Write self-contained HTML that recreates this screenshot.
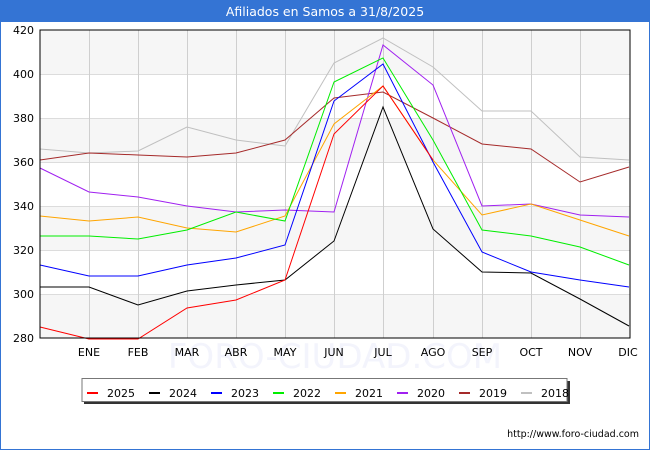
<!DOCTYPE html><html><head><style>
body{margin:0;width:650px;height:450px;overflow:hidden;font-family:"DejaVu Sans","Liberation Sans",sans-serif}
</style></head><body>
<svg width="650" height="450" xmlns="http://www.w3.org/2000/svg" font-family="DejaVu Sans, Liberation Sans, sans-serif">
<rect x="0.5" y="0.5" width="649" height="449" fill="#fff" stroke="#3474d4"/>
<rect x="0" y="0" width="650" height="22" fill="#3474d4"/>
<text x="325" y="16" fill="#fff" font-size="12.5" text-anchor="middle">Afiliados en Samos a 31/8/2025</text>
<g fill="#f6f6f6"><rect x="40" y="30" width="590" height="44"/><rect x="40" y="118" width="590" height="44"/><rect x="40" y="206" width="590" height="44"/><rect x="40" y="294" width="590" height="44"/></g>
<g stroke="#dcdcdc"><line x1="40" x2="630" y1="74.5" y2="74.5"/><line x1="40" x2="630" y1="118.5" y2="118.5"/><line x1="40" x2="630" y1="162.5" y2="162.5"/><line x1="40" x2="630" y1="206.5" y2="206.5"/><line x1="40" x2="630" y1="250.5" y2="250.5"/><line x1="40" x2="630" y1="294.5" y2="294.5"/></g>
<g stroke="#cfcfcf"><line x1="89.5" x2="89.5" y1="30" y2="338"/><line x1="138.5" x2="138.5" y1="30" y2="338"/><line x1="187.5" x2="187.5" y1="30" y2="338"/><line x1="236.5" x2="236.5" y1="30" y2="338"/><line x1="285.5" x2="285.5" y1="30" y2="338"/><line x1="334.5" x2="334.5" y1="30" y2="338"/><line x1="383.5" x2="383.5" y1="30" y2="338"/><line x1="433.5" x2="433.5" y1="30" y2="338"/><line x1="482.5" x2="482.5" y1="30" y2="338"/><line x1="531.5" x2="531.5" y1="30" y2="338"/><line x1="580.5" x2="580.5" y1="30" y2="338"/></g>
<text x="335" y="368" font-size="34" fill="#f3f4fc" text-anchor="middle">FORO-CIUDAD.COM</text>
<g fill="none" stroke-width="1">
<polyline stroke="#c0c0c0" points="40,149 89,153 138,151 187,127 236,140 285,146 334,63 383,38 433,67 482,111 531,111 580,157 629,160"/>
<polyline stroke="#a52a2a" points="40,160 89,153 138,155 187,157 236,153 285,140 334,98 383,92 433,118 482,144 531,149 580,182 629,167"/>
<polyline stroke="#a020f0" points="40,168 89,192 138,197 187,206 236,212 285,210 334,212 383,45 433,85 482,206 531,204 580,215 629,217"/>
<polyline stroke="#ffa500" points="40,216 89,221 138,217 187,228 236,232 285,216 334,124 383,86 433,160 482,215 531,204 580,220 629,236"/>
<polyline stroke="#00ee00" points="40,236 89,236 138,239 187,230 236,212 285,221 334,82 383,58 433,140 482,230 531,236 580,247 629,265"/>
<polyline stroke="#0000ff" points="40,265 89,276 138,276 187,265 236,258 285,245 334,101 383,64 433,162 482,252 531,272 580,280 629,287"/>
<polyline stroke="#000" points="40,287 89,287 138,305 187,291 236,285 285,280 334,241 383,107 433,229 482,272 531,273 580,299 629,326"/>
<polyline stroke="#ff0000" points="40,327 89,339 138,339 187,308 236,300 285,280 334,134 383,86 433,160"/>
</g>
<rect x="40" y="30" width="590" height="308" fill="none" stroke="#000"/>
<g font-size="11" fill="#000" text-anchor="end"><text x="34" y="34">420</text><text x="34" y="78">400</text><text x="34" y="122">380</text><text x="34" y="166">360</text><text x="34" y="210">340</text><text x="34" y="254">320</text><text x="34" y="298">300</text><text x="34" y="342">280</text></g>
<g font-size="11" fill="#000" text-anchor="middle"><text x="89" y="356">ENE</text><text x="138" y="356">FEB</text><text x="187" y="356">MAR</text><text x="236" y="356">ABR</text><text x="285" y="356">MAY</text><text x="334" y="356">JUN</text><text x="383" y="356">JUL</text><text x="433" y="356">AGO</text><text x="482" y="356">SEP</text><text x="531" y="356">OCT</text><text x="580" y="356">NOV</text><text x="628" y="356">DIC</text></g>
<rect x="84" y="381" width="486" height="23" fill="#333"/>
<rect x="82" y="378.5" width="485" height="23" fill="#fff" stroke="#777"/>
<g stroke-width="2"><line x1="87" x2="98" y1="393" y2="393" stroke="#f00"/><line x1="149" x2="160" y1="393" y2="393" stroke="#000"/><line x1="211" x2="222" y1="393" y2="393" stroke="#00f"/><line x1="273" x2="284" y1="393" y2="393" stroke="#0e0"/><line x1="335" x2="346" y1="393" y2="393" stroke="#ffa500"/><line x1="397" x2="408" y1="393" y2="393" stroke="#a020f0"/><line x1="459" x2="470" y1="393" y2="393" stroke="#a52a2a"/><line x1="521" x2="532" y1="393" y2="393" stroke="#c0c0c0"/></g>
<g font-size="11" fill="#000"><text x="107" y="397">2025</text><text x="169" y="397">2024</text><text x="231" y="397">2023</text><text x="293" y="397">2022</text><text x="355" y="397">2021</text><text x="417" y="397">2020</text><text x="479" y="397">2019</text><text x="541" y="397">2018</text></g>
<text x="639" y="437" font-size="9.5" fill="#000" text-anchor="end">http://www.foro-ciudad.com</text>
</svg>
</body></html>
